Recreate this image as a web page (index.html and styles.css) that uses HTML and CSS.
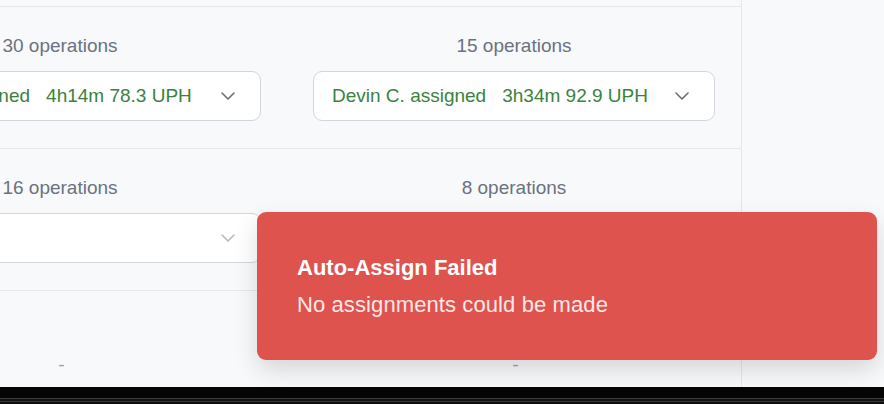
FILE: index.html
```html
<!DOCTYPE html>
<html lang="en">
<head>
<meta charset="utf-8">
<title>Assignments</title>
<link rel="stylesheet" href="styles.css">
</head>
<body>
<div class="screen">
  <div class="page">
    <div class="main">
      <div class="row row-prev"></div>
      <div class="row">
        <div class="cell">
          <div class="ops">30 operations</div>
          <div class="select">
            <span class="val"><span class="who">Maria S. assigned</span><span class="stat">4h14m 78.3 UPH</span></span>
            <svg class="chev" width="14" height="8" viewBox="0 0 14 8"><path d="M1 1l6 6 6-6" fill="none" stroke="currentColor" stroke-width="1.6" stroke-linecap="round" stroke-linejoin="round"/></svg>
          </div>
        </div>
        <div class="cell">
          <div class="ops">15 operations</div>
          <div class="select">
            <span class="val"><span class="who">Devin C. assigned</span><span class="stat">3h34m 92.9 UPH</span></span>
            <svg class="chev" width="14" height="8" viewBox="0 0 14 8"><path d="M1 1l6 6 6-6" fill="none" stroke="currentColor" stroke-width="1.6" stroke-linecap="round" stroke-linejoin="round"/></svg>
          </div>
        </div>
      </div>
      <div class="row">
        <div class="cell">
          <div class="ops">16 operations</div>
          <div class="select select-empty">
            <span class="val"></span>
            <svg class="chev" width="14" height="8" viewBox="0 0 14 8"><path d="M1 1l6 6 6-6" fill="none" stroke="currentColor" stroke-width="1.6" stroke-linecap="round" stroke-linejoin="round"/></svg>
          </div>
        </div>
        <div class="cell">
          <div class="ops">8 operations</div>
          <div class="select select-empty">
            <span class="val"></span>
            <svg class="chev" width="14" height="8" viewBox="0 0 14 8"><path d="M1 1l6 6 6-6" fill="none" stroke="currentColor" stroke-width="1.6" stroke-linecap="round" stroke-linejoin="round"/></svg>
          </div>
        </div>
      </div>
      <div class="row row-last">
        <div class="cell"><div class="dash">-</div></div>
        <div class="cell"><div class="dash">-</div></div>
      </div>
    </div>
    <div class="side"></div>
  </div>
  <div class="dock"></div>
</div>
<div class="toast" role="alert">
  <div class="toast-title">Auto-Assign Failed</div>
  <div class="toast-msg">No assignments could be made</div>
</div>
</body>
</html>
```
FILE: styles.css
```css
* { box-sizing: border-box; }
html, body { margin: 0; padding: 0; }
body {
  width: 884px;
  height: 404px;
  overflow: hidden;
  background: #f8f9fb;
  font-family: "Liberation Sans", Arial, sans-serif;
}
.screen { display: flex; flex-direction: column; height: 404px; }
.page { display: flex; height: 387px; }
.main {
  width: 742px;
  border-right: 1px solid #e6e7ea;
  overflow: hidden;
}
.side { flex: 1; background: #f8f9fb; }
.row {
  display: grid;
  grid-template-columns: 454px 454px;
  margin-left: -167px;
  border-bottom: 1px solid #e5e7eb;
}
.row-prev { height: 7px; }
.row-last { border-bottom: none; }
.cell {
  padding: 27px 26px;
  display: flex;
  flex-direction: column;
  align-items: stretch;
}
.ops {
  font-size: 19px;
  line-height: 24px;
  color: #6b7280;
  text-align: center;
  margin-bottom: 13px;
}
.select {
  height: 50px;
  background: #fff;
  border: 1px solid #d4d6db;
  border-radius: 9px;
  display: flex;
  align-items: center;
  justify-content: space-between;
  padding: 0 25px 0 18px;
}
.val {
  font-size: 19px;
  color: #3a823e;
  display: flex;
  gap: 16px;
  white-space: nowrap;
}
.chev { color: #6e6e6e; flex: none; }
.select-empty .chev { color: #b9b9bb; }
.row-last .cell { padding-top: 62px; }
.dash {
  font-size: 19px;
  line-height: 24px;
  color: #9ca3af;
  text-align: center;
  padding-left: 3px;
}
.dock {
  height: 17px;
  background:
    linear-gradient(#050505 0 11px, #3c3c3c 11px 12px, #111 12px 14px, #3a3a3a 14px 15px, #0c0c0c 15px);
}
.toast {
  position: absolute;
  left: 257px;
  top: 212px;
  width: 620px;
  height: 148px;
  background: #de534e;
  border-radius: 9px;
  box-shadow: 0 10px 24px rgba(0, 0, 0, 0.14);
  padding: 0 40px;
  display: flex;
  flex-direction: column;
  justify-content: center;
  gap: 9px;
  color: #fff;
}
.toast-title {
  font-size: 22px;
  line-height: 28px;
  font-weight: 700;
}
.toast-msg {
  font-size: 22px;
  line-height: 28px;
  color: #fde8e7;
  letter-spacing: 0.1px;
}
```
